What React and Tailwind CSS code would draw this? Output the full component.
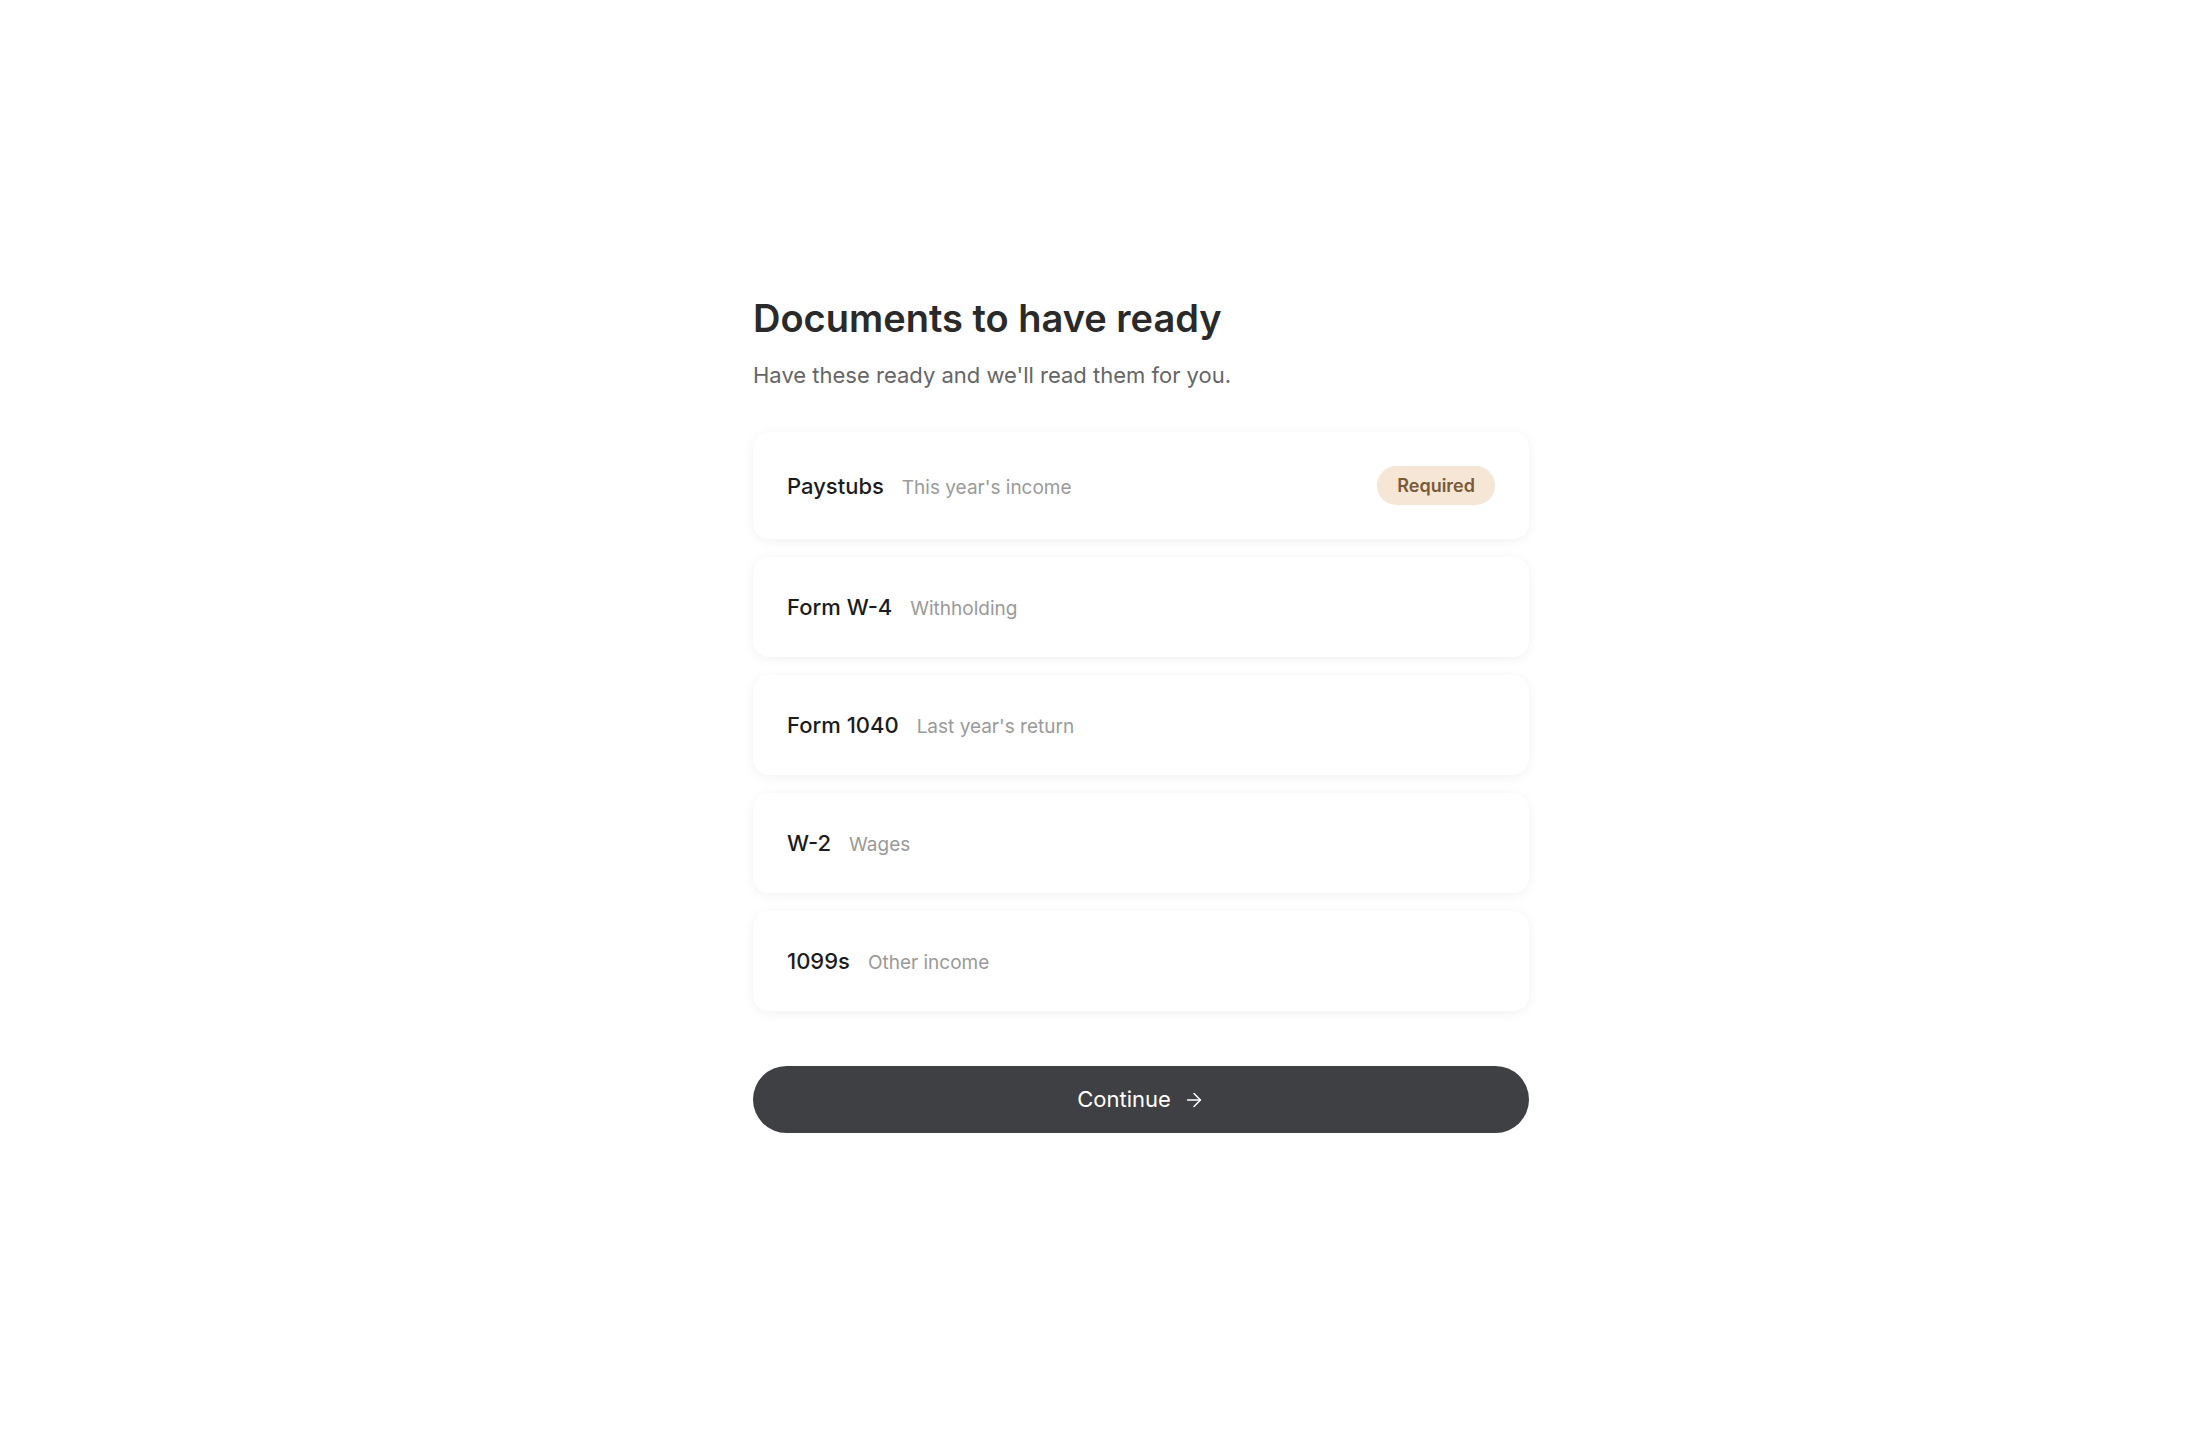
import { ArrowRight } from 'lucide-react';

const docs = [
  { name: 'Paystubs', note: "This year's income", required: true },
  { name: 'Form W-4', note: 'Withholding' },
  { name: 'Form 1040', note: "Last year's return" },
  { name: 'W-2', note: 'Wages' },
  { name: '1099s', note: 'Other income' },
];

const DocRow = ({ name, note, required }) => (
  <div className="flex items-center justify-between rounded-[16px] bg-white px-[34px] py-[34px] shadow-[0_2px_12px_rgba(0,0,0,0.06)]">
    <div className="flex h-[32px] items-baseline gap-[18px] leading-[32px]">
      <span className="text-[22px] font-medium text-[#1c1c1c]">{name}</span>
      <span className="text-[19px] text-[#9a9a9a]">{note}</span>
    </div>
    {required && (
      <span className="flex h-[39px] items-center rounded-full bg-[#f5e6d6] px-[20px] text-[18px] font-semibold text-[#7b5a36]">
        Required
      </span>
    )}
  </div>
);

export default function App() {
  return (
    <div className="flex min-h-screen justify-center bg-white pl-[82px] font-['Inter',sans-serif]">
      <div className="w-[776px] pt-[296px] pb-[200px]">
        <h1 className="text-[38px] font-semibold leading-[44px] text-[#2a2a2a]">Documents to have ready</h1>
        <p className="mt-[20px] text-[22px] leading-[30px] text-[#666666]">Have these ready and we'll read them for you.</p>

        <div className="mt-[42px] flex flex-col gap-[18px]">
          {docs.map((d) => (
            <DocRow key={d.name} {...d} />
          ))}
        </div>

        <button className="mt-[55px] flex h-[67px] w-full items-center justify-center gap-[12px] rounded-full bg-[#3f4044] text-[22px] text-white">
          Continue
          <ArrowRight className="h-[22px] w-[22px]" strokeWidth={1.6} />
        </button>
      </div>
    </div>
  );
}
